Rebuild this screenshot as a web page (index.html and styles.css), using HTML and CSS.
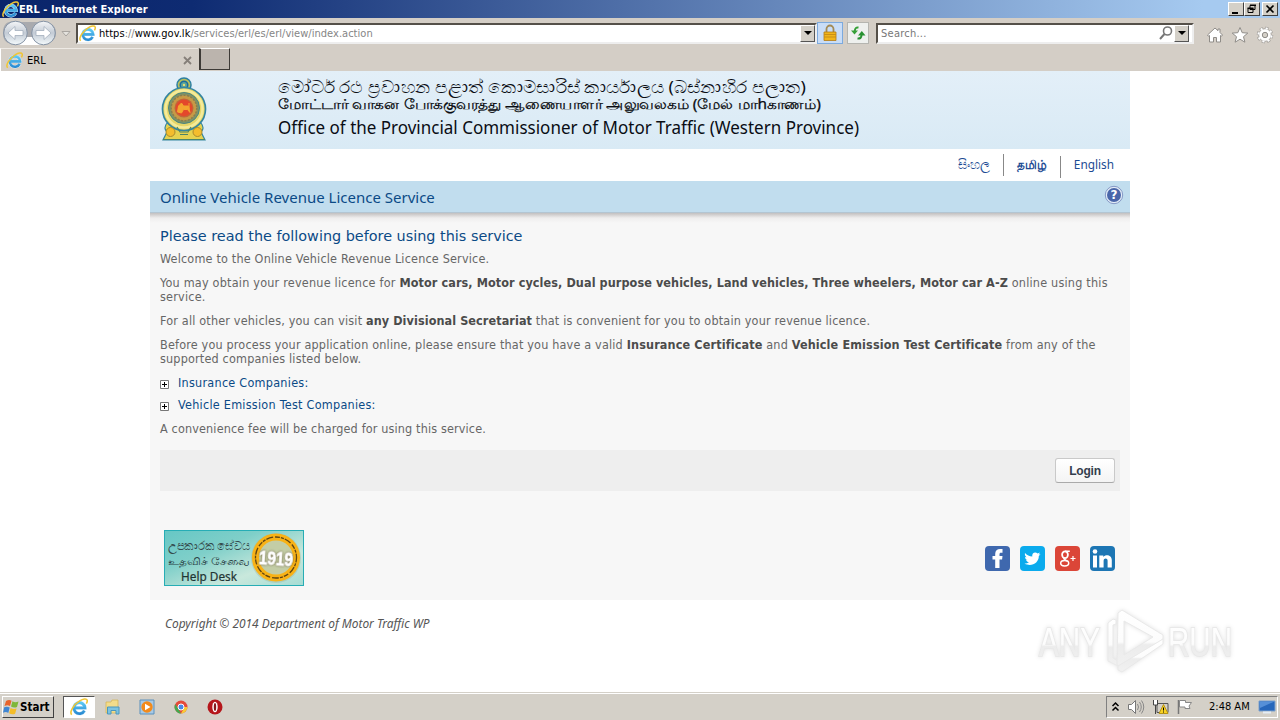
FILE: index.html
```html
<!DOCTYPE html>
<html lang="en">
<head>
<meta charset="utf-8">
<title>ERL - Internet Explorer</title>
<link rel="stylesheet" href="styles.css">
</head>
<body>
<svg class="defs" width="0" height="0">
  <defs>
    <linearGradient id="ieBlue" x1="0" y1="0" x2="0" y2="1"><stop offset="0" stop-color="#5cc8f4"/><stop offset="1" stop-color="#2a8bd2"/></linearGradient>
    <linearGradient id="disc" x1="0" y1="0" x2="0" y2="1"><stop offset="0" stop-color="#f5f6f8"/><stop offset=".5" stop-color="#c3cbd5"/><stop offset="1" stop-color="#f4fafc"/></linearGradient>
    <linearGradient id="mark" x1="0" y1="0" x2="0" y2="1"><stop offset="0" stop-color="#fff"/><stop offset=".55" stop-color="#fcfcfc"/><stop offset=".6" stop-color="#ececec"/><stop offset="1" stop-color="#f1f1f1"/></linearGradient>
    <linearGradient id="teal" x1="0" y1="0" x2="1" y2="1"><stop offset="0" stop-color="#66c7c5"/><stop offset=".35" stop-color="#7fcfc9"/><stop offset=".7" stop-color="#c9e8dc"/><stop offset="1" stop-color="#a5dcd4"/></linearGradient>
    <symbol id="ie" viewBox="0 0 16 16">
      <path d="M12.800 11.200A4.900 4.900 0 1 1 13.300 8.800H4.800" fill="none" stroke="#d8effa" stroke-width="3.200"/>
      <path d="M12.800 11.200A4.900 4.900 0 1 1 13.300 8.800H4.800" fill="none" stroke="url(#ieBlue)" stroke-width="2.400"/>
      <path d="M1.600 14.800C-.8 12.800 3 6 8.600 2.600c3-1.800 6-2.400 6.600-.8.4 1.200-.2 2.400-.7 3.200" fill="none" stroke="#f0c534" stroke-width="1.400"/>
    </symbol>
  </defs>
</svg>
<header class="titlebar">
  <svg class="ie-title" width="17" height="17"><use href="#ie"/></svg>
  <span class="window-title">ERL - Internet Explorer</span>
  <div class="window-buttons">
    <span class="wbtn"><svg width="14" height="12"><path d="M3 9h6v2H3z"/></svg></span>
    <span class="wbtn"><svg width="14" height="12"><path d="M5 2.500h5v4H5zM3 5.500h5v4H3z" fill="#d4d0c8" stroke="#000"/><path d="M5 1.500h6v1.500H5zM2.500 4.500h6V6h-6z"/></svg></span>
    <span class="wbtn close"><svg width="14" height="12"><path d="M3.500 2.500l7 7M10.500 2.500l-7 7" stroke="#000" stroke-width="1.700"/></svg></span>
  </div>
</header>
<nav class="navbar">
  <svg class="navarrows" width="74" height="30" viewBox="0 0 74 30">
    <path d="M3 15C3 0 15 4 20 4h18c8 0 18 0 18 11S44 26 38 26H18C10 26 3 26 3 15z" fill="#a9aaae"/><path d="M16 19H44V27H16z" fill="#fff"/>
    <circle cx="15.500" cy="15" r="11.800" fill="url(#disc)" stroke="#8492a4"/>
    <circle cx="43.500" cy="15" r="11.800" fill="url(#disc)" stroke="#8492a4"/>
    <path d="M8 15l7-6.500v4h8v5h-8v4zM51 15l-7-6.500v4h-8v5h8v4z" fill="#fff" stroke="#a3afbd" stroke-width=".8"/>
    <path d="M62 13.500h8l-4 4.500z" fill="#e5e3de" stroke="#a9a5a0"/>
  </svg>
  <div class="address">
    <svg width="17" height="17"><use href="#ie"/></svg>
    <span class="url">https<i>://</i>www.gov.lk<i>/services/erl/es/erl/view/index.action</i></span>
    <span class="drop"></span>
  </div>
  <span class="lock"><svg width="16" height="18" viewBox="0 0 16 18"><path d="M4.500 9V5a3.500 3.500 0 0 1 7 0v4" fill="none" stroke="#a38a55" stroke-width="1.800"/><path d="M2 8h12v8.500H2z" fill="#f1b51c" stroke="#b27b16" stroke-width=".8"/><path d="M2 10.500h12M2 13h12" stroke="#c98f17"/></svg></span>
  <span class="refresh"><svg width="16" height="16" viewBox="0 0 16 16"><path d="M8.500 2.500Q5 2 4.800 6" fill="none" stroke="#35a037" stroke-width="2"/><path d="M1 5.500h7L4.500 9.500z" fill="#35a037"/><path d="M7.500 13.500Q11.500 14 11.500 10" fill="none" stroke="#279131" stroke-width="2"/><path d="M8 10.500h7.500L11.800 6z" fill="#279131"/></svg></span>
  <div class="search">
    <span class="placeholder">Search...</span>
    <svg width="16" height="16" viewBox="0 0 16 16"><circle cx="9.500" cy="6" r="4" fill="none" stroke="#777" stroke-width="1.600"/><path d="M6.500 9L2 14" stroke="#777" stroke-width="2"/></svg>
    <span class="drop"></span>
  </div>
  <div class="tools">
    <svg width="18" height="18" viewBox="0 0 18 18"><path d="M1.500 9L9 2l3 2.700V3h2v3.500L16.500 9l-1 1.200-1-.7V16h-4v-4.500h-3V16h-4V9.500l-1 .7z" fill="#fff" stroke="#8f8c88"/></svg>
    <svg width="18" height="18" viewBox="0 0 18 18"><path d="M9 1.500l2.200 5.200 5.600.4-4.300 3.600 1.400 5.500L9 13.200l-4.900 3 1.400-5.500L1.200 7.100l5.600-.4z" fill="#fff" stroke="#8f8c88"/></svg>
    <svg width="18" height="18" viewBox="0 0 18 18"><circle cx="9" cy="9" r="6.700" fill="none" stroke="#8f8c88" stroke-width="3" stroke-dasharray="3 2.260"/><circle cx="9" cy="9" r="6.300" fill="#fff" stroke="#8f8c88" stroke-width=".7"/><circle cx="9" cy="9" r="6.700" fill="none" stroke="#fff" stroke-width="2" stroke-dasharray="2.200 3.060" stroke-dashoffset="-.4"/><circle cx="9" cy="9" r="2.700" fill="#d4d0c8" stroke="#8f8c88"/></svg>
  </div>
</nav>
<div class="tabs">
  <div class="tab"><svg width="17" height="17"><use href="#ie"/></svg><span>ERL</span><svg class="tabx" width="9" height="9"><path d="M1 1l7 7M8 1L1 8" stroke="#857f79" stroke-width="1.800"/></svg></div>
  <div class="newtab"></div>
</div>
<main class="viewport">
  <div class="page">
    <div class="banner">
      <svg class="emblem" width="48" height="66" viewBox="0 0 48 66">
        <circle cx="24" cy="9" r="7" fill="#b9bf5e" stroke="#2b7fa2" stroke-width="1.500"/><circle cx="24" cy="9" r="3.800" fill="#5aa39c" stroke="#1a6c9c" stroke-width="1.500"/><circle cx="24" cy="9" r="1.200" fill="#e8dc70"/>
        <path d="M7 47q-4 5 0 9l-4 8h42l-4-8q4-4 0-9l-8 3H15z" fill="#e6d24e" stroke="#3787a0" stroke-width="1.200"/>
        <circle cx="24" cy="33" r="21.500" fill="#e6d668" stroke="#3585a0" stroke-width="1.700"/>
        <circle cx="24" cy="33" r="18.500" fill="none" stroke="#f4eb9b" stroke-width="2.500"/>
        <circle cx="24" cy="32" r="15.500" fill="#7f9466" stroke="#4b8581"/>
        <circle cx="24" cy="32" r="12.800" fill="#c79a45" stroke="#8b7d4e" stroke-width="1.500" stroke-dasharray="2 1.500"/>
        <circle cx="24" cy="32" r="9.500" fill="#c2653a"/><circle cx="24" cy="32" r="8.300" fill="#e4472b"/>
        <path d="M17.500 36l1-6 3-3 2 3h5l1.500 6.500-2.500-3h-4l-2 3.500zM29 27v6" fill="#f4a52f" stroke="#f4a52f"/>
        <circle cx="10.500" cy="56" r="4.500" fill="#f4bd2d" stroke="#a98b2c"/><circle cx="37.500" cy="56" r="4.500" fill="#f4bd2d" stroke="#a98b2c"/>
        <path d="M17 51l3 5h8l3-5M20 58.500h8M3 63.500h42" fill="none" stroke="#4c8468" stroke-width="1.200"/>
      </svg>
      <svg class="banner-text" width="600" height="78">
        <text x="0" y="22" font-size="16.500" textLength="528" lengthAdjust="spacingAndGlyphs">මෝටර් රථ ප්‍රවාහන පළාත් කොමසාරිස් කාර්යාලය (බස්නාහිර පලාත)</text>
        <text class="tamil" x="0" y="38" font-size="14" textLength="543" lengthAdjust="spacingAndGlyphs">மோட்டார் வாகன போக்குவரத்து ஆணையாளர் அலுவலகம் (மேல் மாhகாணம்)</text>
        <text x="0" y="63" font-size="17.500" textLength="581" lengthAdjust="spacingAndGlyphs">Office of the Provincial Commissioner of Motor Traffic (Western Province)</text>
      </svg>
    </div>
    <div class="languages">
      <a class="si">සිංහල</a><a class="ta">தமிழ்</a><a class="en">English</a>
    </div>
    <div class="service-title"><h1>Online Vehicle Revenue Licence Service</h1>
      <svg width="20" height="20" viewBox="0 0 20 20"><circle cx="10" cy="10" r="8.700" fill="#e4edf7" stroke="#8498c6"/><circle cx="10" cy="10" r="7" fill="#4a66a9"/><text x="10" y="14.300" text-anchor="middle" class="q">?</text></svg>
    </div>
    <div class="content">
      <h2>Please read the following before using this service</h2>
      <p class="p1">Welcome to the Online Vehicle Revenue Licence Service.</p>
      <p class="p2">You may obtain your revenue licence for <b>Motor cars, Motor cycles, Dual purpose vehicles, Land vehicles, Three wheelers, Motor car A-Z</b> online using this<br>service.</p>
      <p class="p3">For all other vehicles, you can visit <b>any Divisional Secretariat</b> that is convenient for you to obtain your revenue licence.</p>
      <p class="p4">Before you process your application online, please ensure that you have a valid <b>Insurance Certificate</b> and <b>Vehicle Emission Test Certificate</b> from any of the<br>supported companies listed below.</p>
      <div class="expand"><svg width="9" height="9"><path d="M.5.5h8v8h-8z" fill="#fff" stroke="#777"/><path d="M2 4.500h5M4.500 2v5" stroke="#000"/></svg><a>Insurance Companies:</a></div>
      <div class="expand second"><svg width="9" height="9"><path d="M.5.5h8v8h-8z" fill="#fff" stroke="#777"/><path d="M2 4.500h5M4.500 2v5" stroke="#000"/></svg><a>Vehicle Emission Test Companies:</a></div>
      <p class="p5">A convenience fee will be charged for using this service.</p>
      <div class="actions"><button class="login">Login</button></div>
      <div class="links">
        <svg class="help" width="140" height="56" viewBox="0 0 140 56">
          <rect x=".5" y=".5" width="139" height="55" fill="url(#teal)" stroke="#27adb5"/>
          <text x="4" y="19.500" font-size="12" fill="#33494b" textLength="83" lengthAdjust="spacingAndGlyphs">උපකාරක සේවය</text>
          <text x="4" y="34.500" font-size="10.500" fill="#2b4245" textLength="82" lengthAdjust="spacingAndGlyphs">உதவிச் சேவை</text>
          <text x="17" y="51" font-size="12" fill="#1f3533" stroke="#1f3533" stroke-width=".2" textLength="56" lengthAdjust="spacingAndGlyphs">Help Desk</text>
          <circle cx="112" cy="28" r="25" fill="#9fb9a5" opacity=".45"/>
          <circle cx="112" cy="27.500" r="20.500" fill="#c3cda6" stroke="#f8b216" stroke-width="7"/>
          <circle cx="112" cy="27.500" r="20.500" fill="none" stroke="#5d4414" stroke-width="1.300" stroke-dasharray="5 1 3 1 7 2"/>
          <text class="phone" transform="rotate(4 112 28)" x="95" y="34.500" textLength="34" lengthAdjust="spacingAndGlyphs">1919</text>
        </svg>
        <div class="social">
          <svg width="25" height="25"><rect width="25" height="25" rx="4" fill="#3f68ae"/><path d="M10.200 22v-8.500H7.500V10h2.700V8c0-3.300 1.900-5 4.900-5H17.500v3.700h-1.500c-1.200 0-1.500.6-1.500 1.500V10h3l-.4 3.500h-2.600V22z" fill="#fff"/></svg>
          <svg width="25" height="25"><rect width="25" height="25" rx="4" fill="#0babed"/><path d="M5 7c2 2.300 4.400 3.500 7.300 3.600-.8-3.600 3-5.300 5.300-3.100L20 6.600l-1.300 1.900 1.800-.3-1.700 1.900c.2 7-7.600 11.300-14.300 7.500 1.700.1 3.200-.4 4.500-1.300-1.500-.2-2.500-.9-2.900-2.200h1.500c-1.700-.6-2.500-1.700-2.500-3.200l1.500.4C5 10 4.600 8.400 5 7z" fill="#fff"/></svg>
          <svg width="25" height="25"><rect width="25" height="25" rx="4" fill="#db4638"/><g fill="none" stroke="#fff"><ellipse cx="10" cy="8.700" rx="2.900" ry="3.400" stroke-width="1.800"/><path d="M10 5.300h4.800M9.500 12c-2 1 1.500 2 3 3.300" stroke-width="1.400"/><ellipse cx="9.700" cy="17.200" rx="4" ry="2.700" stroke-width="1.500"/><path d="M15.500 12.500h5M18 10v5" stroke-width="1.200"/></g></svg>
          <svg width="25" height="25"><rect width="25" height="25" rx="4" fill="#1d76b4"/><path d="M3 9.500h4V21.500H3zM9.300 9.500h4v1.600c1.800-2.900 8.500-2.700 8.500 3v7.400h-4.200v-6.700c0-3.300-4-3.100-4 0v6.700H9.300z" fill="#fff"/><circle cx="5" cy="5.500" r="2.300" fill="#fff"/></svg>
        </div>
      </div>
    </div>
    <footer>Copyright © 2014 Department of Motor Traffic WP</footer>
  </div>
  <svg class="watermark" width="230" height="68" viewBox="0 0 230 68">
    <g fill="url(#mark)" stroke="#e9e9e9" stroke-width="1">
      <text class="wm" x="5" y="50" textLength="61" lengthAdjust="spacingAndGlyphs">ANY</text>
      <text class="wm" x="134" y="50" textLength="64" lengthAdjust="spacingAndGlyphs">RUN</text>
      <path d="M74 17l5-4 3 1v4l-3 1v33l5 3v5l-10-5z"/>
      <path fill-rule="evenodd" d="M84 7l4-3 41 25v4L88 62l-5-3zM90 15v34l29-18z"/>
      <path d="M84 60l45-27v5L88 66l-4-2z"/>
    </g>
  </svg>
</main>
<div class="taskbar">
  <div class="start"><svg width="17" height="16" viewBox="0 0 17 16"><path d="M3 2q3-2 5.500-.3L7 7Q4.500 5.500 1.500 7z" fill="#e8642c"/><path d="M9.500 2.200Q12 4 15.500 2.500L14 8q-3 1.300-6-.5z" fill="#7fb73b"/><path d="M1.200 8.300Q4 7 6.700 8.500L5.300 14Q3 12.200 0 13.800z" fill="#3f86d3"/><path d="M7.600 9q2.800 1.700 6 .5l-1.500 5.200q-3 1.300-6-.5z" fill="#f4bd28"/></svg><span>Start</span></div>
  <div class="task active"><svg width="18" height="18"><use href="#ie"/></svg></div>
  <div class="task"><svg width="16" height="16" viewBox="0 0 16 16"><path d="M1 3h5l1-2h6v13H1z" fill="#f3dc8b" stroke="#d3b252" stroke-width=".7"/><path d="M2.500 8h11.500v7h-3v-3.500H6V15H2.500z" fill="#7ec3e0" stroke="#4a97be"/></svg></div>
  <div class="task"><svg width="16" height="16" viewBox="0 0 16 16"><path d="M1 1h14v14H1z" fill="#a7c9e5" stroke="#5b91bd"/><circle cx="8" cy="8" r="5.700" fill="#f28a1b"/><path d="M6 4.700v6.600L11.500 8z" fill="#fff"/></svg></div>
  <div class="task"><svg width="16" height="16" viewBox="0 0 16 16"><circle cx="8" cy="8" r="6.500" fill="#e44b3b"/><path d="M2.300 5L8 14.500A6.500 6.500 0 0 1 2.300 5z" fill="#43a850"/><path d="M8 8h6.500A6.500 6.500 0 0 1 8 14.500l3-5.500z" fill="#f8cb35"/><circle cx="8" cy="8" r="3" fill="#4788e8" stroke="#fff"/></svg></div>
  <div class="task"><svg width="16" height="16" viewBox="0 0 16 16"><circle cx="8" cy="8" r="7.500" fill="#b5161b"/><ellipse cx="8" cy="8" rx="2.700" ry="5.200" fill="#fff"/><ellipse cx="8" cy="8" rx="1.200" ry="4" fill="#85191c"/></svg></div>
  <div class="tray">
    <svg width="9" height="12"><path d="M1.500 5l3-3 3 3M1.500 9.500l3-3 3 3" fill="none" stroke="#000" stroke-width="1.500"/></svg>
    <svg width="18" height="16" viewBox="0 0 18 16"><path d="M1.500 5.500h3l4-4v13l-4-4h-3z" fill="#fff" stroke="#777"/><path d="M10.500 5q2 3 0 6M12.500 3q3.500 5 0 10M14.500 1.500q4.500 6.500 0 13" fill="none" stroke="#888"/></svg>
    <svg width="17" height="16" viewBox="0 0 17 16"><path d="M5 4.500h11v9H5z" fill="#d4d0c8" stroke="#555"/><path d="M1.500 1v5h4V1M3.500 6v9" fill="#fff" stroke="#444"/><path d="M11.500 5.500l4.500 9H7z" fill="#f9d325" stroke="#b79415"/><path d="M11.500 8.500v3M11.500 12.500v1" stroke="#000"/></svg>
    <svg width="17" height="16" viewBox="0 0 17 16"><path d="M2.500 1v14" stroke="#777" stroke-width="1.500"/><path d="M3.500 1.500h6v2h6l-2.500 3.500 1 2.500H9V8H3.500z" fill="#fff" stroke="#888"/></svg>
    <span class="clock">2:48 AM</span>
    <svg width="18" height="16" viewBox="0 0 18 16"><path d="M1 2h16v10H1z" fill="#2767bb" stroke="#7ea1cb"/><path d="M1.500 2.500h15L2 9z" fill="#5690d8"/><path d="M5 13.500h8" stroke="#e5edf5" stroke-width="2"/></svg>
  </div>
</div>
</body>
</html>
```
FILE: styles.css
```css
* { box-sizing: border-box; }
body { margin: 0; width: 1280px; height: 720px; overflow: hidden; display: flex; flex-direction: column; background: #fff; font-family: "DejaVu Sans Condensed", "DejaVu Sans", sans-serif; font-size: 11px; color: #000; }
.defs { position: absolute; }
svg { display: block; flex: none; }
.titlebar { height: 18px; display: flex; align-items: center; padding-left: 2px; background: linear-gradient(90deg, #0a246a 0, #0e2b72 15%, #a6caf0 94%); color: #fff; }
.window-title { font-weight: bold; font-size: 11px; letter-spacing: .05px; }
.window-buttons { display: flex; margin-left: auto; padding-right: 2px; }
.wbtn { width: 16px; height: 14px; background: #d4d0c8; border: 1px solid; border-color: #fff #404040 #404040 #fff; }
.close { margin-left: 2px; }
.navbar { height: 30px; background: #d4cec6; display: flex; align-items: center; }
.navarrows { margin-right: 2px; }
.address, .search { height: 21px; background: #fff; border: 2px solid; border-color: #555049 #eee #eee #555049; display: flex; align-items: center; }
.address { width: 741px; padding-left: 1px; }
.url { margin-left: 3px; white-space: nowrap; letter-spacing: .03px; }
.url i { font-style: normal; color: #858585; }
.drop { width: 15px; height: 17px; margin-left: auto; background: #d4d0c8; border: 1px solid; border-color: #fff #555 #555 #fff; display: flex; align-items: center; justify-content: center; }
.drop::after { content: ""; border: 4px solid transparent; border-top-color: #000; border-bottom: 0; }
.lock { width: 26px; height: 22px; background: #c9ddf7; border: 1px solid #7caade; display: flex; justify-content: center; align-items: center; }
.refresh { width: 22px; height: 22px; margin-left: 4px; background: #eef0ee; border: 1px solid #b5b5b0; display: flex; justify-content: center; align-items: center; }
.search { margin-left: 7px; width: 318px; padding: 0 3px; }
.placeholder { color: #777; letter-spacing: .25px; }
.search svg { margin-left: auto; }
.search .drop { margin-left: 0; }
.tools { display: flex; gap: 7px; margin-left: 12px; padding-top: 3px; }
.tabs { height: 23px; background: #d4cec6; display: flex; }
.tab { width: 198px; border-top: 1px solid #eeeae5; border-left: 1px solid #fff; display: flex; align-items: center; padding: 0 6px 0 5px; }
.tab span { margin-left: 4px; }
.tabx { margin-left: auto; }
.newtab { width: 31px; height: 22px; border: 2px solid #3d3a36; border-top-width: 1px; border-top-color: #fff; border-right-width: 1px; border-bottom-width: 1px; background: #bbb4ad; margin-left: 1px; }
.viewport { height: 621px; position: relative; background: #fff; }
.page { width: 980px; margin: 0 auto; }
.banner { height: 78px; padding-left: 10px; display: flex; background: linear-gradient(#e3eff8, #d9eaf5); }
.emblem { margin-top: 5px; }
.banner-text { margin-left: 70px; fill: #0a0d14; font-family: "Noto Sans", sans-serif; }
.tamil { stroke: currentColor; stroke-width: .25px; }
.help { font-family: "Noto Sans", sans-serif; }
.languages { height: 32px; display: flex; justify-content: flex-end; padding-right: 16px; font: 12px/32px "Noto Sans", sans-serif; color: #1c4b93; }
.languages a { height: 22px; line-height: 22px; margin-top: 5px; }
.si { border-right: 1px solid #888; padding-right: 13px; margin-right: 13px; font-size: 12.500px; }
.languages .ta { margin-right: 13px; font-weight: bold; }
.languages .en { border-left: 1px solid #888; padding-left: 13px; margin-top: 7px; line-height: 16px; font-size: 11.800px; }
.service-title { height: 32px; background: #c1ddee; display: flex; justify-content: space-between; padding: 4px 6px 0 10px; color: #0b4a86; border-bottom: 1px solid #b3c5d2; }
h1 { margin: 0; font: 15px/24px "Noto Sans", sans-serif; }
.q { font: bold 12px "DejaVu Sans", sans-serif; fill: #fff; }
.content { height: 387px; padding: 0 10px; background: linear-gradient(#c2c0c0 0, #efeeee 5px, #f7f7f7 10px); color: #666; font-size: 12.500px; line-height: 14px; white-space: nowrap; letter-spacing: .18px; }
h2 { margin: 0; padding-top: 14px; font: 14.400px/19px "DejaVu Sans", sans-serif; color: #0b4a86; letter-spacing: 0; }
p { margin: 0 0 10px; }
b { color: #4b4b4b; letter-spacing: .09px; }
.p1 { margin-top: 6px; letter-spacing: .185px; }
.p2 { letter-spacing: .22px; }
.p4 { letter-spacing: .18px; }
.p4 b { letter-spacing: .14px; }
.expand { display: flex; gap: 9px; align-items: center; height: 14px; color: #0b4a86; margin-bottom: 8px; letter-spacing: .26px; }
.expand svg { margin-top: 3px; }
.second { margin-bottom: 10px; }
.p5 { margin-bottom: 14px; letter-spacing: .15px; }
.actions { height: 41px; background: #eee; display: flex; justify-content: flex-end; padding: 8px 5px 0; }
.login { width: 60px; height: 25px; padding: 0; font: bold 12px "Liberation Sans", Arial, sans-serif; letter-spacing: -.2px; color: #333e4d; background: linear-gradient(#fff, #f4f4f4); border: 1px solid #c9c9c9; border-bottom-color: #aaa; border-radius: 3px; }
.links { display: flex; justify-content: space-between; padding: 39px 5px 0 4px; letter-spacing: 0; }
.social { display: flex; gap: 10px; padding-top: 16px; }
.phone { font: bold 19px "Liberation Sans", sans-serif; fill: #fff; stroke: #fff; stroke-width: .8px; filter: drop-shadow(0 0 1px #665c3c); }
footer { padding: 13px 15px; font: italic 11.900px/20px "Noto Sans", sans-serif; color: #555; }
.watermark { position: absolute; left: 1034px; top: 535px; filter: drop-shadow(0 0 2px #e2e2e2); }
.wm { font: 41px "Liberation Sans", sans-serif; stroke-width: 2px; paint-order: stroke; }
.taskbar { height: 28px; background: #d4d0c8; border-top: 1px solid #d4d0c8; box-shadow: inset 0 1px #fff; display: flex; align-items: center; padding: 0 2px; }
.start { width: 52px; height: 22px; border: 1px solid; border-color: #fff #404040 #404040 #fff; display: flex; align-items: center; font-weight: bold; gap: 0; font-size: 11.500px; }
.task { width: 34px; height: 22px; display: flex; align-items: center; justify-content: center; }
.active { width: 32px; margin: 0 1px 0 9px; background: #fff; border: 1px solid; border-color: #555 #fff #fff #555; }
.tray { margin-left: auto; width: 172px; height: 22px; border: 1px solid; border-color: #808080 #fff #fff #808080; display: flex; align-items: center; gap: 7px; padding-left: 4px; }
.clock { margin: 0 1px 0 9px; white-space: nowrap; }
```
